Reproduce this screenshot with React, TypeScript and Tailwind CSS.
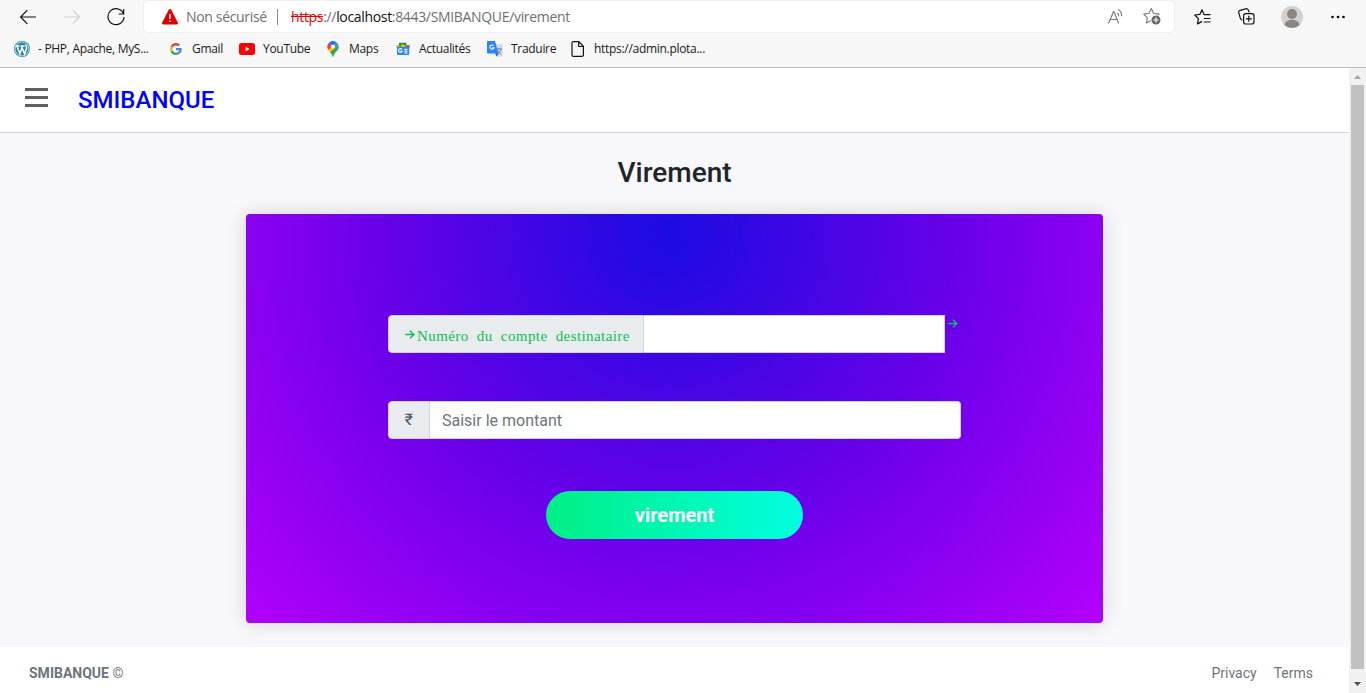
import React from "react";

const ui = "font-['Open_Sans','Noto_Sans',sans-serif]";

function BackArrow({ color }: { color: string }) {
  return (
    <svg className="h-4 w-4" viewBox="0 0 16 16" fill="none" stroke={color} strokeWidth="1.2">
      <path d="M16 8H.8M7.3 1.2.6 8l6.700 6.800" />
    </svg>
  );
}

function Toolbar() {
  return (
    <div className="flex h-[33px] items-center">
      <div className="ml-5 flex h-8 w-4 items-center"><BackArrow color="#111" /></div>
      <div className="ml-7 flex w-4 rotate-180 items-center"><BackArrow color="#cfcfcf" /></div>
      <svg className="ml-[27px] h-[18px] w-[18px] shrink-0" viewBox="0 0 18 18" fill="none" stroke="#111" strokeWidth="1.2">
        <path d="M16.400 5.600A8 8 0 1 0 17 9M16.700 1v5h-5" />
      </svg>
      <div className="ml-[19px] flex h-[31px] w-[1030px] shrink-0 items-center rounded-[4px] bg-white text-[14px] tracking-[-0.33px] text-[#6e6e6e] shadow-[0_0_2px_rgba(0,0,0,0.12)]">
        <svg className="ml-[18px] h-4 w-4" viewBox="0 0 16 16">
          <path d="M8 0c.6 0 1 .3 1.300.8l6.500 12.800c.5 1-.1 1.900-1.200 1.900H1.400C.3 15.500-.3 14.600.2 13.600L6.700.8C7 .3 7.400 0 8 0Z" fill="#e10000" />
          <path d="M8 5v5M8 11.500v1.500" stroke="#fff" strokeWidth="1.500" />
        </svg>
        <span className="ml-2 w-[80px] whitespace-nowrap">Non sécurisé</span>
        <span className="ml-[11px] h-4 w-px bg-[#8a8a8a]" />
        <span className="ml-[13px] whitespace-nowrap">
          <span className="text-[#e00000] line-through">https</span>://<span className="text-[#111]">localhost</span>:8443/SMIBANQUE/virement
        </span>
        <svg className="mr-[18px] ml-auto h-[18px] w-[18px]" viewBox="0 0 18 18" fill="none" stroke="#777" strokeWidth="1.1">
          <path d="m1.500 15.500 5-12h.5l4.600 12M3.200 11.500h6.700M10.300 4.800c1 .7 1.500 2 1.300 3.500M11 1.500c2.400 1.200 3.900 3.800 3.600 6.800" />
        </svg>
        <svg className="mr-[12px] h-[19px] w-[19px]" viewBox="0 0 19 19">
          <path d="m8.300 1.500 2.300 4.800 5.500.8-3.900 3.700.8 5.300-4.700-2.500-4.900 2.500.9-5.300L.8 7.100l5.300-.8z" fill="none" stroke="#777" strokeWidth="1.1" strokeLinejoin="round" />
          <circle cx="13" cy="13" r="5.300" fill="#fff" /><circle cx="13" cy="13" r="4.500" fill="#6a6a6a" />
          <path d="M13 10.500v5M10.500 13h5" stroke="#fff" strokeWidth="1.2" />
        </svg>
      </div>
      <svg className="ml-5 h-[18px] w-[17px]" viewBox="0 0 17 18" fill="none" stroke="#111" strokeWidth="1.2" strokeLinejoin="round">
        <path d="M10 6.800 8 1.700 5.800 6.400.7 7l3.700 3.700-.9 5.200 4.600-2.500M10 6.700h6.500M9.800 10.500h6.700M9.800 14h6.700" />
      </svg>
      <svg className="ml-[27px] h-[18px] w-[17px]" viewBox="0 0 17 18" fill="none" stroke="#111" strokeWidth="1.2">
        <path d="M4.300 12.200C2.800 11.700 2.500 10.800 2.200 9.800L.8 4.800C.4 3.500.9 2.700 2.100 2.300L7.600.8c1.300-.3 2.100.1 2.700 1.300l.9 2.300" />
        <rect x="5.600" y="5.600" width="10.400" height="10.400" rx="2.200" /><path d="M10.800 7.800v6M7.800 10.800h6" />
      </svg>
      <svg className="ml-[26px] h-[22px] w-[22px]" viewBox="0 0 22 22">
        <circle cx="11" cy="11" r="11" fill="#d4d0cd" /><circle cx="11" cy="8" r="5" fill="#8b8683" />
        <path d="M3.300 18.700c1-3 4-4.900 7.700-4.900s6.700 1.900 7.700 4.900c-4 4.200-11.400 4.200-15.400 0Z" fill="#8b8683" />
      </svg>
      <svg className="ml-[27px] h-4 w-4" viewBox="0 0 16 16"><circle cx="2.500" cy="8" r="1.300" /><circle cx="8" cy="8" r="1.300" /><circle cx="13.500" cy="8" r="1.300" /></svg>
    </div>
  );
}

function Bookmarks() {
  return (
    <div className="mt-px flex h-[30px] items-center pl-[14px] text-[12px] tracking-[-0.3px] text-[#191919]">
      <svg className="h-4 w-4" viewBox="0 0 16 16">
        <circle cx="8" cy="8" r="8" fill="#2782ad" /><circle cx="8" cy="8" r="6.900" fill="none" stroke="#fff" strokeWidth=".7" />
        <path d="M1.600 5h4M6.600 5h4M2.900 5.100l3 7.700 2-5.500M7.400 5.100l3.200 7.700 2-5.700c.4-1.500-1.200-2.200-.6-3.500" stroke="#fff" strokeWidth="1.500" fill="none" />
      </svg>
      <span className="ml-2 w-[113px] whitespace-nowrap">- PHP, Apache, MyS...</span>
      <span className="ml-[17px] flex h-4 w-4 items-center justify-center rounded-full bg-white">
        <svg className="h-3 w-3" viewBox="0 0 48 48">
          <path fill="#EA4335" d="M24 9.500c3.500 0 6.700 1.200 9.200 3.600l6.900-6.900A23.900 23.900 0 0 0 2.600 13.200l8 6.200C12.400 13.700 17.700 9.500 24 9.500z" />
          <path fill="#4285F4" d="M47 24.500c0-1.600-.2-3.100-.4-4.500H24v9h12.900a11 11 0 0 1-4.800 7.200l7.700 6C44.400 38 47 31.800 47 24.500z" />
          <path fill="#FBBC05" d="M10.500 28.600a14.500 14.500 0 0 1 0-9.200l-8-6.200a24 24 0 0 0 0 21.600z" />
          <path fill="#34A853" d="M24 48c6.500 0 11.900-2.100 15.900-5.800l-7.700-6A14.300 14.300 0 0 1 10.500 28.600l-8 6.200A24 24 0 0 0 24 48z" />
        </svg>
      </span>
      <span className="ml-2 w-[30px] whitespace-nowrap">Gmail</span>
      <svg className="ml-[17px] h-[12px] w-4" viewBox="0 0 16 12"><rect width="16" height="12" rx="2.500" fill="#f00" /><path d="m6.500 3.500 4 2.500-4 2.500z" fill="#fff" /></svg>
      <span className="ml-2 w-[46px] whitespace-nowrap">YouTube</span>
      <svg className="ml-[18px] h-4 w-3" viewBox="0 0 12 16">
        <path d="M6 0a5.700 5.700 0 0 0-4.300 2L6 5.700 9 1C8.200.3 7.100 0 6 0Z" fill="#1a73e8" />
        <path d="M1.700 2C.1 4-.2 6.700 1.200 9L6 5.700z" fill="#ea4335" />
        <path d="M1.200 9 3 11.300 8 7 6 3.800z" fill="#fbbc04" />
        <path d="M3 11.300C4.700 13 5.200 14 5.500 15.500c.2.600.8.600 1 0 .5-2.500 1.500-3.500 3.300-5.500 2-2 2.500-4.500 1.200-7L7.800 7z" fill="#34a853" />
        <path d="M9 1 6.500 4 8 7l3-4C10.600 2.200 9.800 1.500 9 1Z" fill="#4285f4" /><circle cx="6" cy="5.500" r="2" fill="#fff" />
      </svg>
      <span className="ml-[10px] w-[29px] whitespace-nowrap">Maps</span>
      <svg className="ml-[18px] h-[14px] w-[14px]" viewBox="0 0 14 14">
        <path d="M3 .8h7.500v5H3z" fill="#21964a" /><path d="m0 3.500 3-1 .8 3.500H.6zM5 2.500 9.500 3 9 6H5z" fill="#fbbc04" /><path d="m14 3.500-3-.8L9.500 6h3.800z" fill="#ea4335" />
        <path d="M1 4.800h12.200V12a1 1 0 0 1-1 1H2a1 1 0 0 1-1-1z" fill="#2684fc" />
        <path d="M6 7.500A1.900 1.900 0 1 0 6.200 9.100H4.600M8.300 7.200h3.200M8.300 9.100h3.200M8.300 11h3.200" stroke="#fff" strokeWidth="1.1" fill="none" />
      </svg>
      <span className="ml-[9px] w-[52px] whitespace-nowrap">Actualités</span>
      <svg className="ml-4 h-4 w-4" viewBox="0 0 16 16">
        <path d="M6 3h9.500v12.500h-6z" fill="#d7dade" /><path d="M9 8h6M12 6.800V8M10 13.500c2-1 3.500-3 4-5.400M10.500 9.500l3.500 4" stroke="#738594" fill="none" />
        <path d="M1 0h7l3.500 12.500H1a1 1 0 0 1-1-1V1a1 1 0 0 1 1-1Z" fill="#2684fc" /><path d="M8 12.500h3.500L9.700 15.500z" fill="#1558d6" />
        <path d="M6.500 4.700a2.100 2.100 0 1 0 .5 2H5" stroke="#fff" strokeWidth="1.1" fill="none" />
      </svg>
      <span className="ml-2 w-[43px] whitespace-nowrap">Traduire</span>
      <svg className="ml-[17px] h-4 w-[14px]" viewBox="0 0 14 16" fill="none" stroke="#111" strokeWidth="1.2"><path d="M2.500.7h5.300l4.600 4.600v8.400c0 1-.6 1.600-1.600 1.600H2.500c-1 0-1.500-.6-1.500-1.600V2.200C1 1.200 1.600.7 2.500.7ZM7.700.8v4.700h4.600" /></svg>
      <span className="ml-[9px] whitespace-nowrap">https://admin.plota...</span>
    </div>
  );
}

function GreenArrow() {
  return <svg className="h-[9px] w-[10px] shrink-0" viewBox="0 0 10 9" fill="none" stroke="#0abf60" strokeWidth="1.4"><path d="M.3 4.500h8.500M5 .7l3.900 3.800L5 8.300" /></svg>;
}

export default function App() {
  return (
    <div className="flex h-[693px] w-[1366px] flex-col overflow-hidden bg-white font-[Roboto,sans-serif]">
      <header className={`h-[68px] shrink-0 border-b border-[#bcbcbc] bg-[#f7f7f7] ${ui}`}>
        <Toolbar />
        <Bookmarks />
      </header>
      <div className="flex min-h-0 flex-1">
        <div className="flex w-[1349px] flex-col">
          <nav className="flex h-[65px] shrink-0 items-center border-b border-[#d3d4d8] bg-white pl-[25px]">
            <div className="mb-[5px] flex w-[23px] flex-col gap-[5px]">
              <span className="h-[3px] bg-[#5f5f5f]" /><span className="h-[3px] bg-[#5f5f5f]" /><span className="h-[3px] bg-[#5f5f5f]" />
            </div>
            <span className="ml-[30px] text-2xl font-medium text-[#0000ff]">SMIBANQUE</span>
          </nav>
          <main className="flex flex-1 flex-col items-center bg-[#f7f7fc]">
            <h1 className="mt-[23px] text-[28px] leading-[34px] font-medium text-[#212529]">Virement</h1>
            <section className="mt-6 flex h-[409px] w-[857px] flex-col items-center rounded-[4px] bg-[radial-gradient(circle_at_49.3%_5%,#1b0be1_0%,#6b00ea_51%,#b400fb_100%)] pt-[101px] shadow-[0_0_20px_rgba(0,0,0,0.15)]">
              <div className="flex h-[38px] w-[573px]">
                <div className="flex w-[256px] items-center rounded-l-[4px] border border-[#ced4da] bg-[#e9ecef] pl-4">
                  <GreenArrow />
                  <span className="mt-[3px] ml-[2px] font-['Liberation_Serif',serif] text-[15px] leading-6 tracking-[0.42px] whitespace-nowrap text-[#0bbf50] [word-spacing:4px]">Numéro du compte destinataire</span>
                </div>
                <input className="w-[301px] border border-l-0 border-[#ced4da] bg-white outline-none" />
                <div className="pt-[4px] pl-[3px]"><GreenArrow /></div>
              </div>
              <div className="mt-12 flex h-[38px] w-[573px]">
                <div className="flex w-[42px] items-center justify-center rounded-l-[4px] border border-[#ced4da] bg-[#e9ecef] text-base text-[#495057]">₹</div>
                <input placeholder="Saisir le montant" className="flex-1 rounded-r-[4px] border border-l-0 border-[#ced4da] bg-white px-3 pt-[2px] text-base outline-none placeholder:text-[#6c757d] placeholder:opacity-100" />
              </div>
              <button className="mt-[52px] h-12 w-[257px] rounded-full bg-[linear-gradient(90deg,#00ef85,#00ffdf)] text-xl font-bold text-white">virement</button>
            </section>
          </main>
          <footer className="flex h-[46px] shrink-0 items-center bg-white pt-[6px] pl-[29px] text-sm text-[#6c757d]">
            <span><b>SMIBANQUE</b> ©</span>
            <span className="mr-[17px] ml-auto">Privacy</span><span className="mr-9">Terms</span>
          </footer>
        </div>
        <aside className="flex w-[17px] flex-col items-center bg-[#f1f1f1]">
          <svg className="h-[17px] w-[17px]" viewBox="0 0 17 17"><path d="M5 11h7L8.500 7z" fill="#a3a3a3" /></svg>
          <div className="h-[584px] w-[13px] bg-[#c1c1c1]" />
          <svg className="h-6 w-[17px]" viewBox="0 0 17 24"><path d="M5 13h7l-3.500 4z" fill="#505050" /></svg>
        </aside>
      </div>
    </div>
  );
}
